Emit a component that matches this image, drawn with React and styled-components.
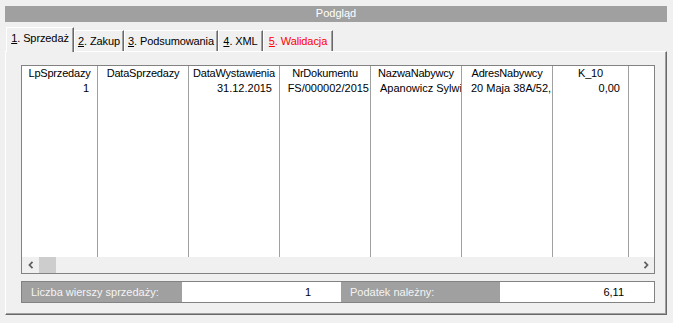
import React from 'react'
import styled, { createGlobalStyle } from 'styled-components'

const Global = createGlobalStyle`
  body {
    margin: 0;
    background: #f0f0f0;
    font-family: "Liberation Sans", Arial, sans-serif;
    font-size: 11px;
  }
`

const columns = [
  { title: 'LpSprzedazy', width: 76, value: '1', align: 'right', pad: '0 8px 0 0' },
  { title: 'DataSprzedazy', width: 91, value: '', align: 'right', pad: '0 7px 0 0' },
  { title: 'DataWystawienia', width: 91, value: '31.12.2015', align: 'right', pad: '0 7px 0 0' },
  { title: 'NrDokumentu', width: 91, value: 'FS/000002/2015', align: 'right', pad: '0 1px 0 0' },
  { title: 'NazwaNabywcy', width: 91, value: 'Apanowicz Sylwia', align: 'left', pad: '0 0 0 9px' },
  { title: 'AdresNabywcy', width: 91, value: '20 Maja 38A/52,', align: 'left', pad: '0 0 0 9px' },
  { title: 'K_10', width: 76, value: '0,00', align: 'right', pad: '0 8px 0 0' },
]

const tabs = [
  { key: '1', label: '. Sprzedaż', width: 68, active: true },
  { key: '2', label: '. Zakup', width: 50 },
  { key: '3', label: '. Podsumowania', width: 94 },
  { key: '4', label: '. XML', width: 45 },
  { key: '5', label: '. Walidacja', width: 70, warn: true },
]

function Chevron({ dir }) {
  return (
    <svg width="6" height="8" viewBox="0 0 6 8">
      <path
        d={dir === 'left' ? 'M4.5 0.8 L1.5 4 L4.5 7.2' : 'M1.5 0.8 L4.5 4 L1.5 7.2'}
        fill="none"
        stroke="#606060"
        strokeWidth="1.8"
      />
    </svg>
  )
}

export default function App() {
  return (
    <Window>
      <Global />
      <TitleBar>Podgląd</TitleBar>
      <TabStrip>
        {tabs.map(t => (
          <Tab key={t.key} $active={t.active} $width={t.width} $warn={t.warn}>
            <u>{t.key}</u>{t.label}
          </Tab>
        ))}
      </TabStrip>
      <TabPage>
        <Grid>
          <Rows>
            {columns.map(c => (
              <Column key={c.title} $width={c.width}>
                <HeaderCell>{c.title}</HeaderCell>
                <DataCell $align={c.align} $pad={c.pad}>{c.value}</DataCell>
              </Column>
            ))}
          </Rows>
          <ScrollBar>
            <Arrow><Chevron dir="left" /></Arrow>
            <Thumb />
            <Track />
            <Arrow><Chevron dir="right" /></Arrow>
          </ScrollBar>
        </Grid>
        <Footer>
          <Label $width={160}>Liczba wierszy sprzedaży:</Label>
          <Value $width={159}>1</Value>
          <Label $width={159}>Podatek należny:</Label>
          <Value>6,11</Value>
        </Footer>
      </TabPage>
    </Window>
  )
}

const Window = styled.div`
  width: 673px;
  height: 323px;
  box-sizing: border-box;
  padding: 6px 6px 0 5px;
  display: flex;
  flex-direction: column;
`

const TitleBar = styled.div`
  height: 16px;
  background: #a0a0a0;
  color: #ffffff;
  text-align: center;
  line-height: 15px;
  font-size: 11px;
`

const TabStrip = styled.div`
  margin-top: 5px;
  height: 24px;
  display: flex;
  align-items: flex-end;
  padding-left: 1px;
  position: relative;
  z-index: 1;
`

const Tab = styled.div`
  box-sizing: border-box;
  width: ${p => p.$width}px;
  height: ${p => (p.$active ? 25 : 21)}px;
  margin-bottom: ${p => (p.$active ? -1 : 0)}px;
  background: #f0f0f0;
  border-top: 1px solid #ffffff;
  border-left: 1px solid #ffffff;
  border-right: 1px solid #696969;
  box-shadow: inset -1px 0 0 #a0a0a0;
  color: ${p => (p.$warn ? '#ff0000' : '#000000')};
  display: flex;
  justify-content: center;
  padding-top: 4px;
  white-space: nowrap;
  font-size: 11px;
  letter-spacing: -0.1px;
`

const TabPage = styled.div`
  box-sizing: border-box;
  height: 264px;
  border-top: 1px solid #ffffff;
  border-left: 1px solid #ffffff;
  border-right: 1px solid #696969;
  border-bottom: 1px solid #696969;
  box-shadow: inset -1px -1px 0 #a0a0a0;
  padding: 13px 11px 0 15px;
  display: flex;
  flex-direction: column;
`

const Grid = styled.div`
  box-sizing: border-box;
  height: 209px;
  border: 1px solid #828282;
  background: #ffffff;
  display: flex;
  flex-direction: column;
`

const Rows = styled.div`
  flex: 1;
  display: flex;
  overflow: hidden;
`

const Column = styled.div`
  box-sizing: border-box;
  width: ${p => p.$width}px;
  flex-shrink: 0;
  border-right: 1px solid #a0a0a0;
  display: flex;
  flex-direction: column;
`

const HeaderCell = styled.div`
  height: 15px;
  line-height: 14px;
  text-align: center;
  color: #000000;
  white-space: nowrap;
  overflow: hidden;
  letter-spacing: -0.2px;
`

const DataCell = styled.div`
  height: 15px;
  line-height: 15px;
  text-align: ${p => p.$align};
  padding: ${p => p.$pad};
  white-space: nowrap;
  overflow: hidden;
  color: #000000;
`

const ScrollBar = styled.div`
  height: 16px;
  background: #f0f0f0;
  display: flex;
  align-items: stretch;
`

const Arrow = styled.div`
  width: 17px;
  display: flex;
  align-items: center;
  justify-content: center;
`

const Thumb = styled.div`
  width: 17px;
  background: #cdcdcd;
`

const Track = styled.div`
  flex: 1;
`

const Footer = styled.div`
  margin-top: 7px;
  height: 22px;
  box-sizing: border-box;
  border: 1px solid #828282;
  display: flex;
`

const Label = styled.div`
  width: ${p => p.$width}px;
  background: #a0a0a0;
  color: #f4f4f4;
  padding-left: 9px;
  box-sizing: border-box;
  line-height: 20px;
  white-space: nowrap;
`

const Value = styled.div`
  width: ${p => (p.$width ? `${p.$width}px` : 'auto')};
  flex: ${p => (p.$width ? '0 0 auto' : '1')};
  background: #ffffff;
  text-align: right;
  padding-right: 30px;
  box-sizing: border-box;
  line-height: 20px;
  color: #000000;
`
